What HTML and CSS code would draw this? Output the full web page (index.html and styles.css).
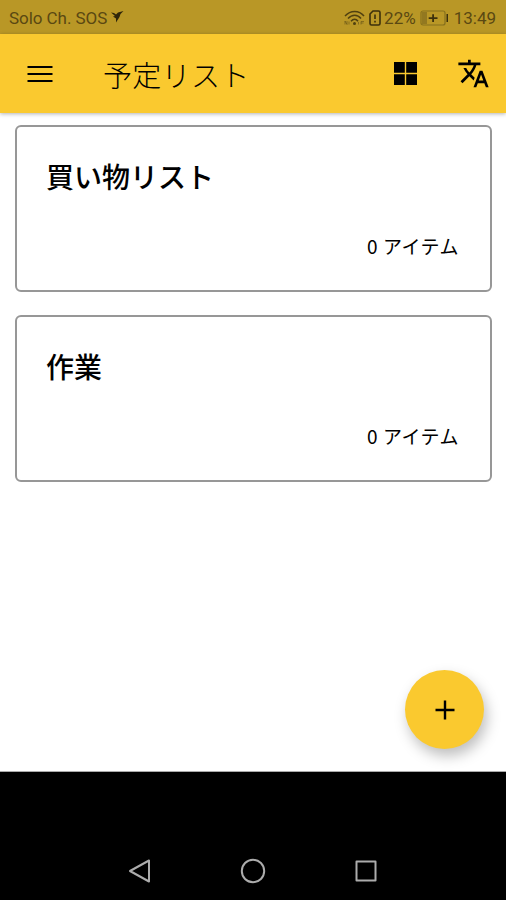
FILE: index.html
```
<!DOCTYPE html>
<html lang="ja">
<head>
    <meta charset="UTF-8">
    <meta name="viewport" content="width=device-width, initial-scale=1.0">
    <title>予定リスト</title>
    <link rel="stylesheet" href="styles.css">
</head>
<body>
    <div class="status-bar">
        <span class="carrier">Solo Ch. SOS</span>
        <svg class="bird" width="13" height="12" viewBox="0 0 13 12">
            <path d="M0 1.500l3 .5 2 1.500L7 1.500 12.500 0 9.500 3 8.500 6 5 11.500 5 7.500 2 5.500l2-.5z"/>
        </svg>
        <div class="status-right">
            <svg class="wifi" width="22" height="16" viewBox="0 0 22 16">
                <path d="M1 6c5.500-6 14-6 19 0M4 8.500c4-4.500 9.500-4.500 13 0M7 11.200c2.300-2.600 5-2.600 7 0"/>
                <circle cx="10.500" cy="13.500" r="1.500"/>
                <path class="thin" d="M1 14.500v-3.500l2 3.500v-3.500M5 14.500v-3M14.500 14.500v-2.500M17 14.500v-3h3M17 13h2.500"/>
            </svg>
            <svg class="sim" width="12" height="16" viewBox="0 0 12 16">
                <path d="M4 1h5.500a1.500 1.500 0 0 1 1.500 1.500v11a1.500 1.500 0 0 1-1.500 1.500h-7A1.500 1.500 0 0 1 1 13.500V4z"/>
                <path d="M6 4.500v4.500M6 10.700v1.800"/>
            </svg>
            <span class="percent">22%</span>
            <svg class="battery" width="29" height="16" viewBox="0 0 29 16">
                <rect class="outline" x="1" y="1" width="24" height="14" rx="2"/>
                <rect class="level" x="2" y="2" width="5" height="12"/>
                <path d="M12.200 4.200h1.800v3h3.500v1.800H14v3h-1.800V9H8.700V7.200h3.500zM26.500 4H28v8h-1.500z"/>
            </svg>
            <span class="time">13:49</span>
        </div>
    </div>

    <header class="app-bar">
        <svg class="menu" width="26" height="18" viewBox="0 0 26 18">
            <path d="M0.500 2h25M0.500 9h25M0.500 16h25"/>
        </svg>
        <h1>予定リスト</h1>
        <svg class="grid" width="23" height="23" viewBox="0 0 23 23">
            <path d="M0 0h10.800v10.800H0zM12.200 0H23v10.800H12.200zM0 12.200h10.800V23H0zM12.200 12.200H23V23H12.200z"/>
        </svg>
        <svg class="translate" width="33" height="33" viewBox="0 0 24 24">
            <path d="M12.870 15.070l-2.540-2.510.03-.03c1.740-1.940 2.980-4.170 3.710-6.530H17V4h-7V2H8v2H1v1.990h11.170C11.500 7.920 10.440 9.750 9 11.350 8.070 10.320 7.300 9.190 6.690 8h-2c.73 1.630 1.730 3.170 2.980 4.560l-5.090 5.020L4 19l5-5 3.110 3.110.76-2.040zM18.500 10h-2L12 22h2l1.120-3h4.750L21 22h2l-4.500-12zm-2.620 7l1.620-4.330L19.120 17h-3.240z"/>
        </svg>
    </header>

    <main class="lists">
        <div class="card">
            <h2>買い物リスト</h2>
            <p>0 アイテム</p>
        </div>
        <div class="card">
            <h2>作業</h2>
            <p>0 アイテム</p>
        </div>
        <button class="add" aria-label="追加">
            <svg width="20" height="20" viewBox="0 0 20 20">
                <path d="M10 0.500v19M0.500 10h19"/>
            </svg>
        </button>
    </main>

    <nav class="nav-bar">
        <svg width="26" height="26" viewBox="0 0 26 26">
            <path d="M22 2.500v21L3 13z"/>
        </svg>
        <svg width="26" height="26" viewBox="0 0 26 26">
            <circle cx="13" cy="13" r="11.200"/>
        </svg>
        <svg width="26" height="26" viewBox="0 0 26 26">
            <rect x="3.500" y="3.500" width="19" height="19"/>
        </svg>
    </nav>
</body>
</html>
```

FILE: styles.css
```
* {
    box-sizing: border-box;
}

body {
    margin: 0;
    height: 900px;
    display: flex;
    flex-direction: column;
    font-family: Roboto, "Noto Sans CJK JP", sans-serif;
    background-color: #fff;
    color: #000;
    overflow: hidden;
}

svg {
    display: block;
    flex-shrink: 0;
}

.status-bar {
    height: 34px;
    padding: 1px 10px 0 9px;
    display: flex;
    align-items: center;
    background-color: #b99726;
    color: #5a4812;
    font-size: 17px;
}

.carrier {
    letter-spacing: -0.05px;
}

.bird {
    margin: -2px 0 0 4px;
    fill: #2f260a;
}

.status-right {
    margin-left: auto;
    display: flex;
    align-items: center;
}

.wifi {
    fill: #4f4010;
}

.wifi path {
    fill: none;
    stroke: #4f4010;
    stroke-width: 1.5;
}

.wifi .thin {
    stroke-width: 0.8;
    opacity: 0.6;
}

.sim {
    margin: 0 3px 0 3px;
    fill: none;
    stroke: #3c300c;
    stroke-width: 1.6;
}

.battery {
    margin: 0 5px 0 4px;
    fill: #3c300c;
}

.battery .outline {
    fill: none;
    stroke: #86701d;
    stroke-width: 1.2;
}

.battery .level {
    fill: #927820;
}

.app-bar {
    height: 79px;
    padding: 0 16px 0 27px;
    display: flex;
    align-items: center;
    background-color: #fac92f;
    box-shadow: 0 1px 4px rgba(0, 0, 0, 0.3);
    z-index: 1;
}

.menu {
    fill: none;
    stroke: #000;
    stroke-width: 2.2;
}

.app-bar h1 {
    margin: 0 auto 0 50px;
    font-family: "Noto Sans CJK JP", sans-serif;
    font-size: 29px;
    font-weight: 300;
    line-height: 40px;
    letter-spacing: 0.3px;
}

.grid {
    margin-right: 40px;
}

.lists {
    flex: 1;
    position: relative;
    padding: 12px 14px 0 15px;
    border-bottom: 1px solid #aaa;
}

.card {
    height: 167px;
    margin-bottom: 23px;
    padding: 27px 31px 0 29px;
    border: 2px solid #979797;
    border-radius: 6px;
    font-family: "Noto Sans CJK JP", sans-serif;
}

.card h2 {
    margin: 0;
    font-size: 28px;
    font-weight: 500;
    line-height: 44px;
}

.card p {
    margin: 34px 0 0;
    font-size: 19px;
    line-height: 28px;
    letter-spacing: 0.5px;
    text-align: right;
}

.add {
    position: absolute;
    right: 22px;
    bottom: 22px;
    width: 79px;
    height: 79px;
    padding: 0;
    border: none;
    border-radius: 50%;
    display: flex;
    justify-content: center;
    align-items: center;
    background-color: #fac92f;
    box-shadow: 3px 7px 14px rgba(0, 0, 0, 0.26);
}

.add svg {
    fill: none;
    stroke: #000;
    stroke-width: 2.4;
}

.nav-bar {
    height: 128px;
    padding: 70px 0 0;
    display: flex;
    justify-content: center;
    align-items: center;
    gap: 87px;
    background-color: #000;
}

.nav-bar svg {
    fill: none;
    stroke: #acacac;
    stroke-width: 2;
    stroke-linejoin: round;
}
```
